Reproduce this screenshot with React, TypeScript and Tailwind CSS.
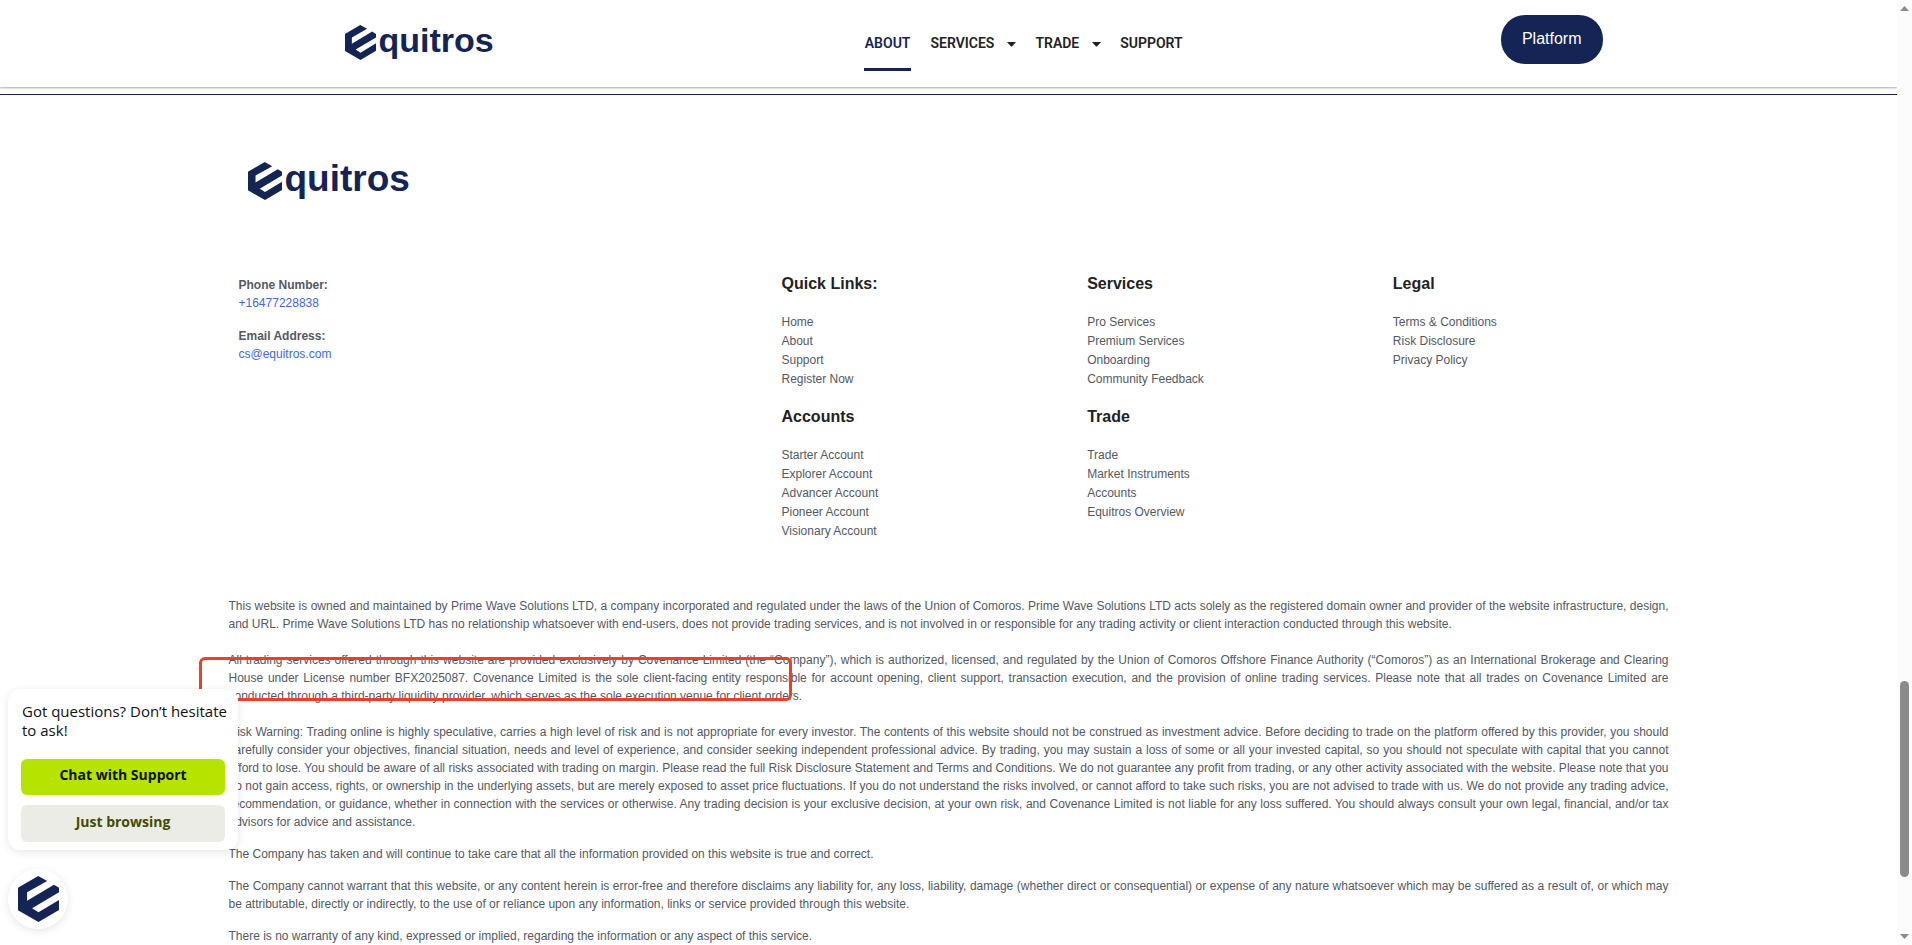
interface LinkGroup {
  title: string
  links: string[]
}

const NAV = [
  { label: 'ABOUT', active: true },
  { label: 'SERVICES', menu: true },
  { label: 'TRADE', menu: true },
  { label: 'SUPPORT' },
]

const GROUPS: LinkGroup[] = [
  { title: 'Quick Links:', links: ['Home', 'About', 'Support', 'Register Now'] },
  { title: 'Services', links: ['Pro Services', 'Premium Services', 'Onboarding', 'Community Feedback'] },
  { title: 'Legal', links: ['Terms & Conditions', 'Risk Disclosure', 'Privacy Policy'] },
  { title: 'Accounts', links: ['Starter Account', 'Explorer Account', 'Advancer Account', 'Pioneer Account', 'Visionary Account'] },
  { title: 'Trade', links: ['Trade', 'Market Instruments', 'Accounts', 'Equitros Overview'] },
]

function Mark({ className }: { className: string }) {
  return (
    <svg viewBox="0 0 122 138" preserveAspectRatio="none" className={className} fill="#132455" aria-hidden="true">
      <path d="M60 0 L87 15 L27 49 V74 L107 26 L122 35 V49 L42 97 L61 109 L122 72 V102 L61 138 L0 103 V35 Z" />
    </svg>
  )
}

function Caret() {
  return (
    <svg viewBox="0 0 9 5" className="mt-[2px] h-[5px] w-[9px]" fill="#222" aria-hidden="true">
      <path d="M0 0h9L5 4.5H4z" />
    </svg>
  )
}

function Header() {
  return (
    <header className="relative bg-white shadow-[0_1px_2px_rgba(0,0,0,0.35)]">
      <div className="mx-auto flex h-[87px] max-w-[1440px] items-start justify-between pr-[66px] pl-[116px]">
        <a href="#" className="flex w-[201px] items-start gap-[3px] pt-[25px]">
          <Mark className="h-[35px] w-[31px]" />
          <span className="text-[34px] leading-[30px] font-bold text-[#132455]">quitros</span>
        </a>

        <nav className="flex gap-[19px] pt-[27px] font-[Roboto,sans-serif] text-sm font-semibold">
          {NAV.map(({ label, active, menu }) => (
            <a
              key={label}
              href="#"
              className={`flex h-11 items-start border-b-[3px] leading-8 ${active ? 'border-[#132455] px-px text-[#132455]' : 'border-transparent text-[#222]'}`}
            >
              {label}
              {menu && <span className="flex h-8 items-center pl-[13px]"><Caret /></span>}
            </a>
          ))}
        </nav>

        <button className="mt-[15px] h-[49px] rounded-3xl bg-[#132455] px-[21px] pb-[2px] text-base text-white">Platform</button>
      </div>
    </header>
  )
}

function Contact() {
  return (
    <address className="w-[553px] pt-1 pl-[10px] leading-[18px] not-italic">
      <strong className="block">Phone Number:</strong>
      <a href="tel:+16477228838" className="block text-[#4169e1]">+16477228838</a>
      <strong className="mt-[15px] block">Email Address:</strong>
      <a href="mailto:cs@equitros.com" className="block text-[#4169e1]">cs@equitros.com</a>
    </address>
  )
}

function Disclaimer() {
  return (
    <div className="relative mt-14 text-justify leading-[18px]">
      <p>
        This website is owned and maintained by Prime Wave Solutions LTD, a company incorporated and regulated under the laws of the Union of Comoros. Prime Wave Solutions LTD acts solely as the registered domain owner and provider of the website infrastructure, design, and URL. Prime Wave Solutions LTD has no relationship whatsoever with end-users, does not provide trading services, and is not involved in or responsible for any trading activity or client interaction conducted through this website.
      </p>
      <p className="mt-[18px]">
        All trading services offered through this website are provided exclusively by Covenance Limited (the “Company”), which is authorized, licensed, and regulated by the Union of Comoros Offshore Finance Authority (“Comoros”) as an International Brokerage and Clearing House under License number BFX2025087. Covenance Limited is the sole client-facing entity responsible for account opening, client support, transaction execution, and the provision of online trading services. Please note that all trades on Covenance Limited are conducted through a third-party liquidity provider, which serves as the sole execution venue for client orders.
      </p>
      <p className="mt-[18px]">
        Risk Warning: Trading online is highly speculative, carries a high level of risk and is not appropriate for every investor. The contents of this website should not be construed as investment advice. Before deciding to trade on the platform offered by this provider, you should carefully consider your objectives, financial situation, needs and level of experience, and consider seeking independent professional advice. By trading, you may sustain a loss of some or all your invested capital, so you should not speculate with capital that you cannot afford to lose. You should be aware of all risks associated with trading on margin. Please read the full Risk Disclosure Statement and Terms and Conditions. We do not guarantee any profit from trading, or any other activity associated with the website. Please note that you do not gain access, rights, or ownership in the underlying assets, but are merely exposed to asset price fluctuations. If you do not understand the risks involved, or cannot afford to take such risks, you are not advised to trade with us. We do not provide any trading advice, recommendation, or guidance, whether in connection with the services or otherwise. Any trading decision is your exclusive decision, at your own risk, and Covenance Limited is not liable for any loss suffered. You should always consult your own legal, financial, and/or tax advisors for advice and assistance.
      </p>
      <p className="mt-[14px]">
        The Company has taken and will continue to take care that all the information provided on this website is true and correct.
      </p>
      <p className="mt-[14px]">
        The Company cannot warrant that this website, or any content herein is error-free and therefore disclaims any liability for, any loss, liability, damage (whether direct or consequential) or expense of any nature whatsoever which may be suffered as a result of, or which may be attributable, directly or indirectly, to the use of or reliance upon any information, links or service provided through this website.
      </p>
      <p className="mt-[14px]">
        There is no warranty of any kind, expressed or implied, regarding the information or any aspect of this service.
      </p>

      {/* license callout */}
      <div className="absolute top-[60px] -left-[30px] h-[44px] w-[593px] rounded-md border-[3px] border-[#ee4027]" />
    </div>
  )
}

function Footer() {
  return (
    <footer className="mt-[7px] border-t border-[#132455]">
      <div className="mx-auto max-w-[1440px] text-xs text-[#54595f]">
        <a href="#" className="flex items-start gap-[3px] pt-[67px] pl-[19px]">
          <Mark className="h-[38px] w-[34px]" />
          <span className="text-[37px] leading-[34px] font-bold text-[#132455]">quitros</span>
        </a>

        <div className="mt-[72px] flex">
          <Contact />
          <div className="grid flex-1 grid-cols-3 gap-x-[30px] gap-y-4">
            {GROUPS.map(({ title, links }) => (
              <section key={title}>
                <h2 className="text-base leading-6 font-bold text-[#222]">{title}</h2>
                <ul className="mt-[17px] leading-[19px]">
                  {links.map(link => (
                    <li key={link}><a href="#">{link}</a></li>
                  ))}
                </ul>
              </section>
            ))}
          </div>
        </div>

        <Disclaimer />
      </div>
    </footer>
  )
}

function ChatWidget() {
  return (
    <aside className="absolute bottom-[16px] left-2 font-['Open_Sans','Noto_Sans',sans-serif] text-sm text-[#111]">
      <div className="w-[230px] rounded-xl bg-white px-[13px] pt-[13px] pb-2 shadow-[0_2px_8px_rgba(0,0,0,0.1)]">
        <p className="-mr-2 pl-px text-[15px] leading-[19px]">Got questions? Don’t hesitate to ask!</p>
        <button className="mt-[19px] block h-9 w-full rounded-md bg-[#b6e400] pb-1 font-bold">Chat with Support</button>
        <button className="mt-[10px] block h-[37px] w-full rounded-md bg-[#ebece6] pb-1 font-bold text-[#3f4d00]">Just browsing</button>
      </div>
      <button aria-label="Open chat" className="mt-[19px] flex size-[60px] items-center justify-center rounded-full bg-white shadow-[0_2px_8px_rgba(0,0,0,0.1)]">
        <Mark className="h-[46px] w-[41px]" />
      </button>
    </aside>
  )
}

function Scrollbar() {
  return (
    <div className="flex w-[15px] flex-col items-center bg-[#fcfcfc] py-[6px]" aria-hidden="true">
      <svg viewBox="0 0 9 5" className="h-[5px] w-[9px]" fill="#8b8b8b"><path d="M4.500 0L9 5H0z" /></svg>
      <div className="flex-[669]" />
      <div className="w-[9px] flex-[196] rounded-full bg-[#8b8b8b]" />
      <div className="flex-[57]" />
      <svg viewBox="0 0 9 5" className="h-[5px] w-[9px]" fill="#8b8b8b"><path d="M4.500 5L0 0h9z" /></svg>
    </div>
  )
}

export default function App() {
  return (
    <div className="relative flex h-screen overflow-hidden bg-white font-['Liberation_Sans',Arial,sans-serif]">
      <main className="min-w-0 flex-1 overflow-hidden">
        <Header />
        <Footer />
      </main>
      <Scrollbar />
      <ChatWidget />
    </div>
  )
}
